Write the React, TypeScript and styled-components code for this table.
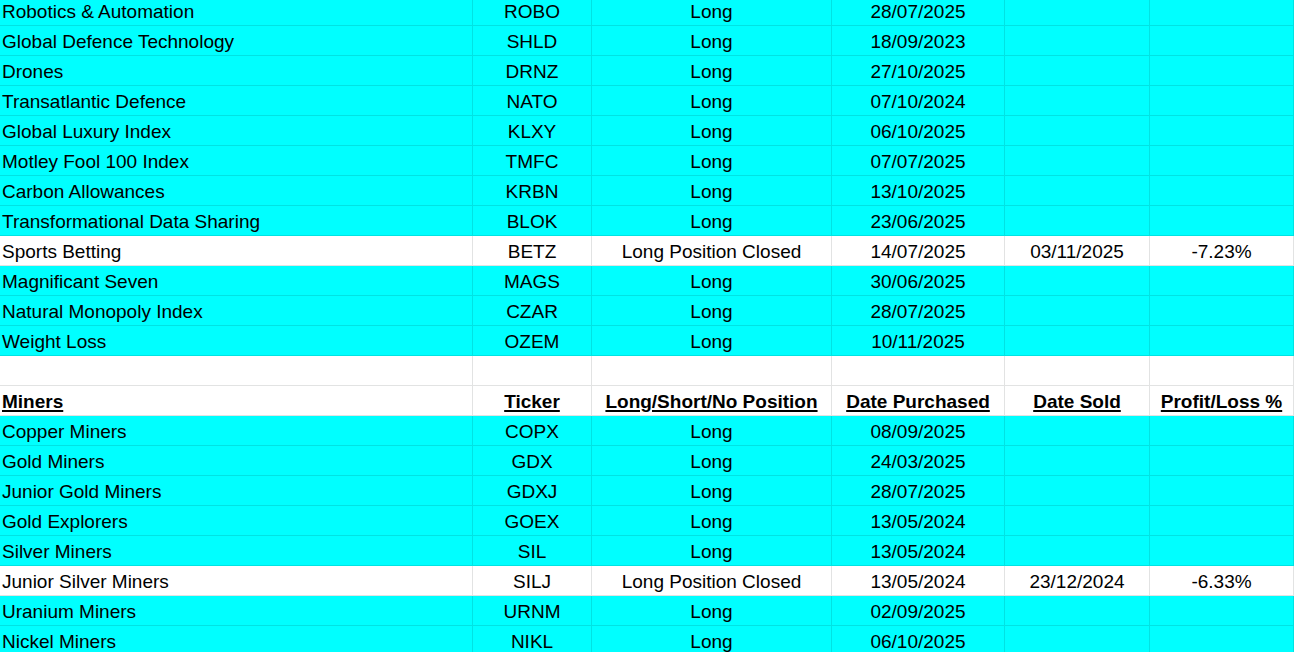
import styled, { createGlobalStyle } from "styled-components";

const GlobalStyle = createGlobalStyle`
  html, body {
    margin: 0;
    padding: 0;
    background: #ffffff;
    overflow: hidden;
  }
  body {
    font-family: "Liberation Sans", Arial, sans-serif;
  }
`;

const Sheet = styled.div`
  display: grid;
  grid-template-columns: 473px 119px 240px 173px 145px 1fr;
  margin-top: -4px;
  width: 1294px;
`;

const Cell = styled.div<{ $fill: boolean; $align: "left" | "center"; $head?: boolean }>`
  box-sizing: border-box;
  height: 30px;
  border-bottom: 1px solid ${(p) => (p.$fill ? "#00e3e3" : "#e2e3e3")};
  border-right: 1px solid ${(p) => (p.$fill ? "#00e3e3" : "#e2e3e3")};
  background: ${(p) => (p.$fill ? "#00ffff" : "#ffffff")};
  display: flex;
  align-items: flex-end;
  justify-content: ${(p) => (p.$align === "left" ? "flex-start" : "center")};
  padding: 0 2px 2px;
  font-size: 19px;
  line-height: 22px;
  color: #000000;
  white-space: nowrap;
  overflow: hidden;
  font-weight: ${(p) => (p.$head ? 700 : 400)};
  text-decoration: ${(p) => (p.$head ? "underline" : "none")};
  text-underline-offset: 2px;
  text-decoration-thickness: 1.5px;
`;

type Row = {
  cells: string[];
  fill: boolean;
  head?: boolean;
};

const active = (name: string, ticker: string, date: string): Row => ({
  cells: [name, ticker, "Long", date, "", ""],
  fill: true,
});

const closed = (name: string, ticker: string, bought: string, sold: string, pl: string): Row => ({
  cells: [name, ticker, "Long Position Closed", bought, sold, pl],
  fill: false,
});

const rows: Row[] = [
  active("Robotics & Automation", "ROBO", "28/07/2025"),
  active("Global Defence Technology", "SHLD", "18/09/2023"),
  active("Drones", "DRNZ", "27/10/2025"),
  active("Transatlantic Defence", "NATO", "07/10/2024"),
  active("Global Luxury Index", "KLXY", "06/10/2025"),
  active("Motley Fool 100 Index", "TMFC", "07/07/2025"),
  active("Carbon Allowances", "KRBN", "13/10/2025"),
  active("Transformational Data Sharing", "BLOK", "23/06/2025"),
  closed("Sports Betting", "BETZ", "14/07/2025", "03/11/2025", "-7.23%"),
  active("Magnificant Seven", "MAGS", "30/06/2025"),
  active("Natural Monopoly Index", "CZAR", "28/07/2025"),
  active("Weight Loss", "OZEM", "10/11/2025"),
  { cells: ["", "", "", "", "", ""], fill: false },
  {
    cells: ["Miners", "Ticker", "Long/Short/No Position", "Date Purchased", "Date Sold", "Profit/Loss %"],
    fill: false,
    head: true,
  },
  active("Copper Miners", "COPX", "08/09/2025"),
  active("Gold Miners", "GDX", "24/03/2025"),
  active("Junior Gold Miners", "GDXJ", "28/07/2025"),
  active("Gold Explorers", "GOEX", "13/05/2024"),
  active("Silver Miners", "SIL", "13/05/2024"),
  closed("Junior Silver Miners", "SILJ", "13/05/2024", "23/12/2024", "-6.33%"),
  active("Uranium Miners", "URNM", "02/09/2025"),
  active("Nickel Miners", "NIKL", "06/10/2025"),
];

export default function App() {
  return (
    <>
      <GlobalStyle />
      <Sheet>
        {rows.map((row, r) =>
          row.cells.map((text, c) => (
            <Cell key={`${r}-${c}`} $fill={row.fill} $align={c === 0 ? "left" : "center"} $head={row.head}>
              {text}
            </Cell>
          ))
        )}
      </Sheet>
    </>
  );
}
